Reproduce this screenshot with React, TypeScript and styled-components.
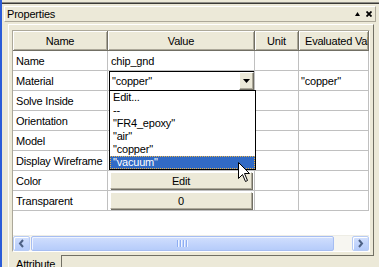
import React from 'react';
import styled, { createGlobalStyle } from 'styled-components';

const Global = createGlobalStyle`
  html, body { margin: 0; padding: 0; background: #ECE9D8; }
  body { font-family: "Liberation Sans", Arial, sans-serif; font-size: 11px; letter-spacing: -0.2px; color: #000; }
  * { box-sizing: border-box; }
`;

const Screen = styled.div`
  position: relative;
  width: 379px;
  height: 267px;
  overflow: hidden;
  display: flex;
  background: #ECE9D8;
`;

const BlueEdge = styled.div`
  width: 2px;
  flex: none;
  background: #2B5CD8;
`;

const Main = styled.div`
  flex: 1;
  min-width: 0;
  display: flex;
  flex-direction: column;
  padding-top: 2px;
`;

const TopRule = styled.div`
  height: 2px;
  flex: none;
  border-top: 1px solid #8E8D86;
  border-bottom: 1px solid #3B3A36;
`;

const TitleBar = styled.div`
  margin: 2px 3px 0 2px;
  height: 16px;
  flex: none;
  border: 1px solid;
  border-color: #fff #ACA899 #ACA899 #fff;
  display: flex;
  align-items: center;
  padding: 0 2px;
`;

const TitleText = styled.span`
  flex: 1;
  line-height: 13px;
`;

const TitleIcons = styled.div`
  display: flex;
  align-items: center;
  gap: 6px;
  padding-right: 1px;
`;

const Panel = styled.div`
  margin: 2px 0 0 6px;
  width: 366px;
  height: 231px;
  flex: none;
  border-left: 1px solid #fff;
  border-top: 1px solid #fff;
  border-right: 1px solid #716F64;
  padding: 5px 3px 3px 3px;
`;

const GridBox = styled.div`
  height: 222px;
  border: 1px solid;
  border-color: #ACA899 #fff #fff #ACA899;
  background: #fff;
  display: flex;
  flex-direction: column;
  overflow: hidden;
`;

const Row = styled.div`
  display: grid;
  grid-template-columns: 95px 147px 44px 70px;
  height: 20px;
  flex: none;
`;

const HeadCell = styled.div<{ $left?: boolean }>`
  background: #ECE9D8;
  border-right: 1px solid #716F64;
  border-bottom: 1px solid #716F64;
  box-shadow: inset 1px 1px 0 #fff, inset -1px -1px 0 #ACA899;
  display: flex;
  align-items: center;
  justify-content: ${p => (p.$left ? 'flex-start' : 'center')};
  padding: ${p => (p.$left ? '0 0 0 6px' : '0')};
  white-space: nowrap;
  overflow: hidden;
`;

const Cell = styled.div<{ $open?: boolean; $pad?: number }>`
  position: relative;
  border-right: 1px solid #C0C0C0;
  border-bottom: 1px solid #C0C0C0;
  display: flex;
  align-items: center;
  padding-left: ${p => (p.$pad ?? 3)}px;
  white-space: nowrap;
  overflow: ${p => (p.$open ? 'visible' : 'hidden')};
  z-index: ${p => (p.$open ? 5 : 'auto')};
`;

const Combo = styled.div`
  flex: 1;
  align-self: stretch;
  margin-left: 1px;
  display: flex;
  border-left: 1px solid #000;
  border-top: 1px solid #000;
  background: #fff;
`;

const ComboText = styled.span`
  flex: 1;
  padding-left: 2px;
  display: flex;
  align-items: center;
`;

const ComboButton = styled.div`
  width: 15px;
  background: #ECE9D8;
  border: 1px solid;
  border-color: #fff #716F64 #716F64 #fff;
  box-shadow: inset -1px -1px 0 #ACA899;
  display: flex;
  align-items: center;
  justify-content: center;
`;

const DropList = styled.div`
  position: absolute;
  top: 100%;
  left: 1px;
  width: 147px;
  border: 1px solid #000;
  background: #fff;
  z-index: 10;
`;

const DropItem = styled.div<{ $selected?: boolean }>`
  height: 13px;
  line-height: 11px;
  padding-left: 2px;
  white-space: nowrap;
  background: ${p => (p.$selected ? '#316AC5' : '#fff')};
  color: ${p => (p.$selected ? '#fff' : '#000')};
  border: 1px ${p => (p.$selected ? 'dotted #E8B44A' : 'solid transparent')};
`;

const CellButton = styled.div`
  flex: 1;
  align-self: stretch;
  margin: 1px 2px 1px 0;
  background: #ECE9D8;
  border: 1px solid;
  border-color: #fff #ACA899 #ACA899 #fff;
  box-shadow: 1px 1px 0 #716F64;
  display: flex;
  align-items: center;
  justify-content: center;
`;

const Filler = styled.div`
  flex: 1;
  background: #fff;
`;

const HScroll = styled.div`
  height: 16px;
  flex: none;
  display: flex;
  background: #F7F6F1;
  border-top: 1px solid #EEEDE5;
`;

const ScrollBtn = styled.div`
  width: 17px;
  flex: none;
  border: 1px solid #B7CBF5;
  border-radius: 2px;
  background: linear-gradient(180deg, #D3E0FD 0%, #C1D4FC 55%, #B5CBFA 100%);
  box-shadow: inset 1px 1px 0 #fff;
  display: flex;
  align-items: center;
  justify-content: center;
`;

const Thumb = styled.div`
  width: 303px;
  flex: none;
  margin: 0 1px;
  border: 1px solid #A6BDF2;
  border-radius: 2px;
  background: linear-gradient(180deg, #D1DFFD 0%, #C3D5FC 50%, #B6CCFA 100%);
  box-shadow: inset 1px 1px 0 #EEF3FF;
  display: flex;
  align-items: center;
  justify-content: center;
  gap: 1px;
`;

const Grip = styled.div`
  width: 1px;
  height: 7px;
  background: #8DADF3;
  box-shadow: 1px 0 0 #EEF4FF;
  margin-right: 1px;
`;

const Track = styled.div`
  flex: 1;
`;

const TabStrip = styled.div`
  display: flex;
  margin-left: 6px;
  width: 366px;
  flex: 1;
`;

const Tab = styled.div`
  width: 54px;
  flex: none;
  border-left: 1px solid #fff;
  border-right: 1px solid #716F64;
  padding: 3px 0 0 7px;
  line-height: 13px;
`;

const TabRest = styled.div`
  flex: 1;
  border-top: 1px solid #716F64;
`;

const Cursor = styled.svg`
  position: absolute;
  left: 238px;
  top: 162px;
  z-index: 20;
`;

const rows: { name: string; kind: 'text' | 'combo' | 'button'; value?: string; evaluated?: string }[] = [
  { name: 'Name', kind: 'text', value: 'chip_gnd' },
  { name: 'Material', kind: 'combo', value: '"copper"', evaluated: '"copper"' },
  { name: 'Solve Inside', kind: 'text' },
  { name: 'Orientation', kind: 'text' },
  { name: 'Model', kind: 'text' },
  { name: 'Display Wireframe', kind: 'text' },
  { name: 'Color', kind: 'button', value: 'Edit' },
  { name: 'Transparent', kind: 'button', value: '0' },
];

const options = ['Edit...', '--', '"FR4_epoxy"', '"air"', '"copper"', '"vacuum"'];

const Chevron = ({ dir }: { dir: 'left' | 'right' }) => (
  <svg width="7" height="9" viewBox="0 0 7 9">
    <path
      d={dir === 'left' ? 'M5 1 L2 4.5 L5 8' : 'M2 1 L5 4.5 L2 8'}
      fill="none"
      stroke="#4D6185"
      strokeWidth="2"
    />
  </svg>
);

export default function App() {
  return (
    <>
      <Global />
      <Screen>
        <BlueEdge />
        <Main>
          <TopRule />
          <TitleBar>
            <TitleText>Properties</TitleText>
            <TitleIcons>
              <svg width="5" height="4" viewBox="0 0 5 4">
                <polygon points="2.5,0 5,4 0,4" fill="#000" />
              </svg>
              <svg width="6" height="6" viewBox="0 0 6 6">
                <path d="M0.5 0.5 L5.5 5.5 M5.5 0.5 L0.5 5.5" stroke="#000" strokeWidth="1.8" />
              </svg>
            </TitleIcons>
          </TitleBar>
          <Panel>
            <GridBox>
              <Row>
                <HeadCell>Name</HeadCell>
                <HeadCell>Value</HeadCell>
                <HeadCell>Unit</HeadCell>
                <HeadCell $left>Evaluated Value</HeadCell>
              </Row>
              {rows.map(r => (
                <Row key={r.name}>
                  <Cell>{r.name}</Cell>
                  {r.kind === 'combo' ? (
                    <Cell $open $pad={0}>
                      <Combo>
                        <ComboText>{r.value}</ComboText>
                        <ComboButton>
                          <svg width="7" height="4" viewBox="0 0 7 4">
                            <polygon points="0,0 7,0 3.5,4" fill="#000" />
                          </svg>
                        </ComboButton>
                      </Combo>
                      <DropList>
                        {options.map(o => (
                          <DropItem key={o} $selected={o === '"vacuum"'}>
                            {o}
                          </DropItem>
                        ))}
                      </DropList>
                    </Cell>
                  ) : r.kind === 'button' ? (
                    <Cell $pad={2}>
                      <CellButton>{r.value}</CellButton>
                    </Cell>
                  ) : (
                    <Cell>{r.value}</Cell>
                  )}
                  <Cell />
                  <Cell $pad={2}>{r.evaluated}</Cell>
                </Row>
              ))}
              <Filler />
              <HScroll>
                <ScrollBtn>
                  <Chevron dir="left" />
                </ScrollBtn>
                <Thumb>
                  <Grip />
                  <Grip />
                  <Grip />
                  <Grip />
                </Thumb>
                <Track />
                <ScrollBtn>
                  <Chevron dir="right" />
                </ScrollBtn>
              </HScroll>
            </GridBox>
          </Panel>
          <TabStrip>
            <Tab>Attribute</Tab>
            <TabRest />
          </TabStrip>
        </Main>
        <Cursor width="13" height="21" viewBox="0 0 13 21">
          <path
            d="M0.5 0.5 L0.5 16.5 L4.5 12.5 L7.5 19.5 L9.5 18.5 L6.5 11.5 L11.5 11.5 Z"
            fill="#fff"
            stroke="#000"
            strokeWidth="1"
          />
        </Cursor>
      </Screen>
    </>
  );
}
